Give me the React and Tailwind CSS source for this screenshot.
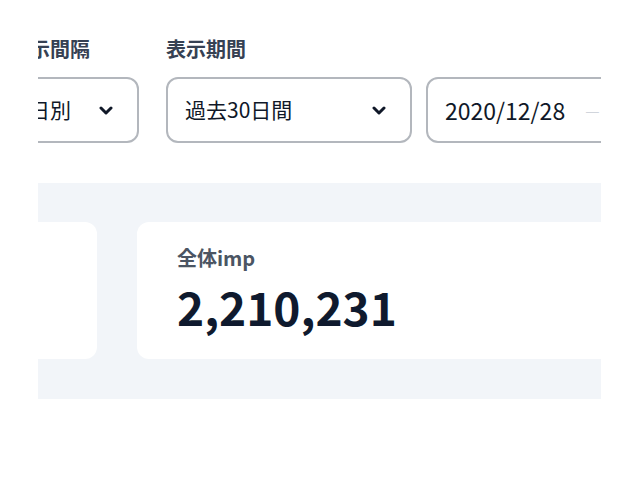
import React from 'react';

const font = { fontFamily: '"Noto Sans CJK JP", "Noto Sans", sans-serif' };

function Chevron() {
  return (
    <svg width="14" height="9" viewBox="0 0 14 9" className="text-gray-900">
      <path d="M2 2l5 5 5-5" fill="none" stroke="currentColor" strokeWidth="3" strokeLinecap="round" strokeLinejoin="round" />
    </svg>
  );
}

function Select({ value, width }) {
  return (
    <div className={`flex h-[66px] ${width} shrink-0 items-center justify-between rounded-[12px] border-2 border-[#b3b7bd] pl-[17px] pr-[24px] text-[21px] text-gray-900`}>
      <span>{value}</span>
      <Chevron />
    </div>
  );
}

export default function App() {
  return (
    <div className="min-h-screen bg-white" style={font}>
      <div className="ml-[38px] w-[563px] overflow-hidden">
        {/* filters */}
        <div className="-ml-[28px] flex gap-[27px] pt-[35px]">
          <div className="flex flex-col gap-[14px]">
            <div className="text-[20px] font-bold leading-[28px] text-gray-700">表示間隔</div>
            <Select value="日別" width="w-[129px]" />
          </div>
          <div className="flex flex-col gap-[14px]">
            <div className="text-[20px] font-bold leading-[28px] text-gray-700">表示期間</div>
            <div className="flex gap-[14px]">
              <Select value="過去30日間" width="w-[246px]" />
              <div className="flex h-[66px] w-[360px] shrink-0 items-center gap-[20px] rounded-[12px] border-2 border-[#b3b7bd] pl-[17px] text-[23px] text-gray-900">
                <span>2020/12/28</span>
                <span className="text-[16px] text-gray-300">—</span>
              </div>
            </div>
          </div>
        </div>

        {/* summary */}
        <div className="mt-10 flex gap-10 bg-[#f2f5f9] pt-[39px] pb-10">
          <div className="-ml-[41px] h-[137px] w-[100px] shrink-0 rounded-[12px] bg-white" />
          <div className="h-[137px] w-[500px] shrink-0 rounded-[12px] bg-white px-10 pt-[22px]">
            <div className="text-[20px] font-bold leading-[28px] text-[#4b5563]">全体imp</div>
            <div className="mt-[4px] text-[46px] font-bold leading-[60px] text-[#0f1a2e]">2,210,231</div>
          </div>
        </div>
      </div>
    </div>
  );
}
